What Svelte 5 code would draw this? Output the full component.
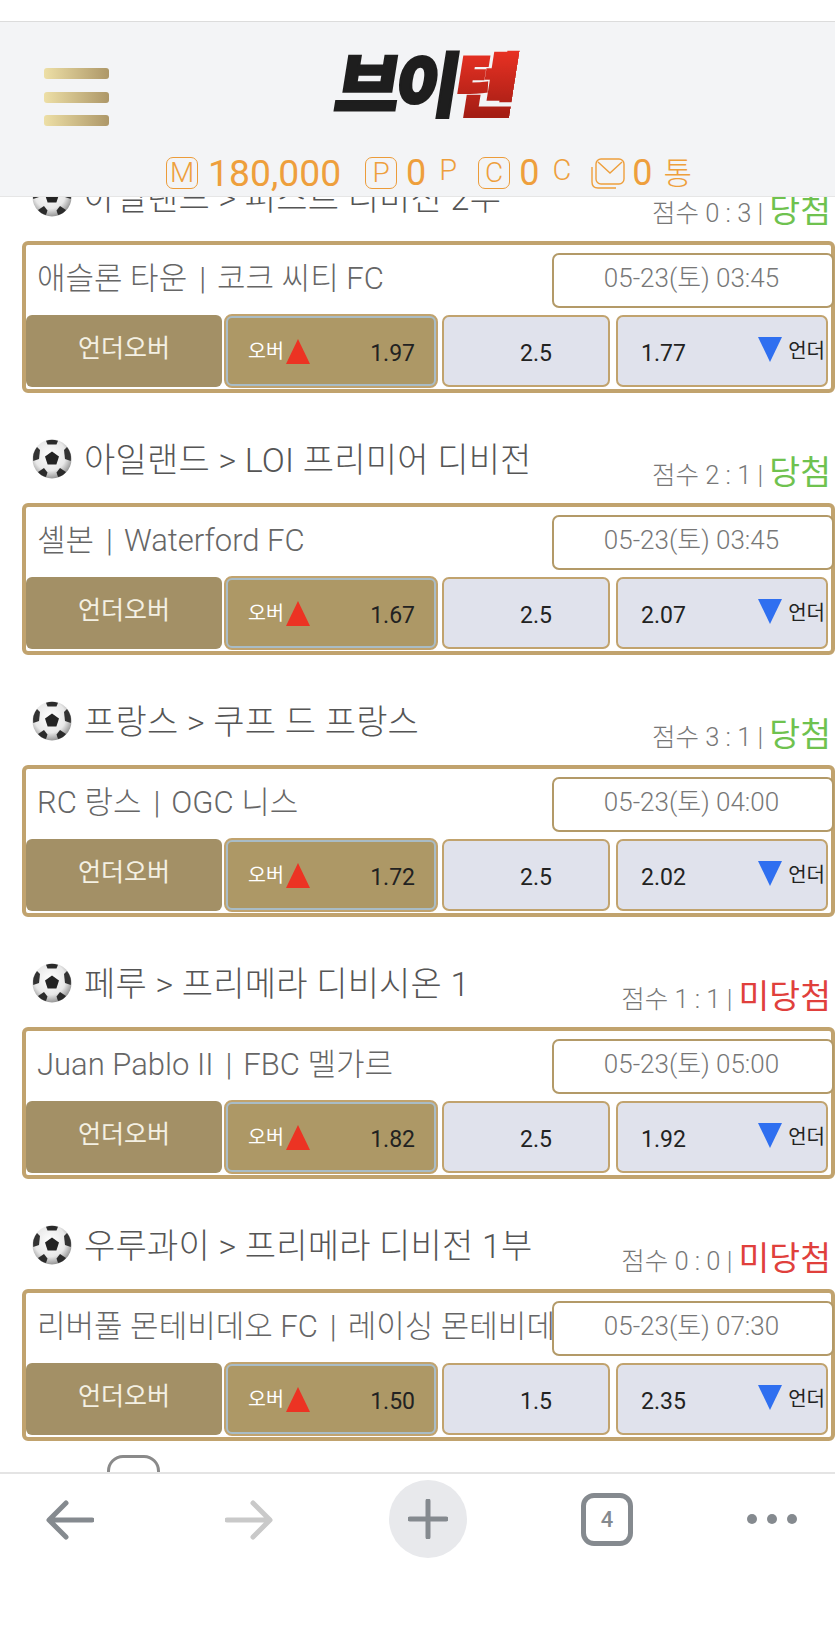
<script>
  const matches = [
    { league: '아일랜드 > 퍼스트 디비전 2부', score: '0 : 3', won: true, home: '애슬론 타운', away: '코크 씨티 FC', date: '05-23(토) 03:45', over: '1.97', line: '2.5', under: '1.77' },
    { league: '아일랜드 > LOI 프리미어 디비전', score: '2 : 1', won: true, home: '셸본', away: 'Waterford FC', date: '05-23(토) 03:45', over: '1.67', line: '2.5', under: '2.07' },
    { league: '프랑스 > 쿠프 드 프랑스', score: '3 : 1', won: true, home: 'RC 랑스', away: 'OGC 니스', date: '05-23(토) 04:00', over: '1.72', line: '2.5', under: '2.02' },
    { league: '페루 > 프리메라 디비시온 1', score: '1 : 1', won: false, home: 'Juan Pablo II', away: 'FBC 멜가르', date: '05-23(토) 05:00', over: '1.82', line: '2.5', under: '1.92' },
    { league: '우루과이 > 프리메라 디비전 1부', score: '0 : 0', won: false, home: '리버풀 몬테비데오 FC', away: '레이싱 몬테비데오 FC', date: '05-23(토) 07:30', over: '1.50', line: '1.5', under: '2.35' }
  ];
</script>

{#snippet ball()}
  <svg class="ball" viewBox="0 0 40 40" aria-hidden="true">
    <defs>
      <radialGradient id="bg" cx="45%" cy="40%" r="62%">
        <stop offset="0" stop-color="#ffffff" />
        <stop offset="0.65" stop-color="#e8e8e8" />
        <stop offset="1" stop-color="#8f8f8f" />
      </radialGradient>
    </defs>
    <circle cx="20" cy="20" r="19.5" fill="url(#bg)" />
    <path d="M20 12.5l7 5-2.6 8h-8.8l-2.6-8z" fill="#232323" />
    <path d="M14 1.8Q20-.2 26 1.8L24.5 5.5h-9z" fill="#2b2b2b" />
    <path d="M1.2 22Q.2 14 5 8l3 3-1 9z" fill="#333" />
    <path d="M38.8 22Q39.8 14 35 8l-3 3 1 9z" fill="#333" />
    <path d="M6 33l6-4 3.5 4.5L14 38Q9 37 6 33z" fill="#2b2b2b" />
    <path d="M34 33l-6-4-3.500 4.500L26 38Q31 37 34 33z" fill="#2b2b2b" />
  </svg>
{/snippet}

<div class="page">
  <div class="top"></div>
  <header class="header">
    <div class="headrow">
      <div class="burger"><i></i><i></i><i></i></div>
      <div class="logo"><span class="blk">브이</span><span class="red">텐</span></div>
    </div>
    <div class="points">
      <span class="badge">M</span><span class="money">180,000</span>
      <span class="badge b2">P</span><span class="num">0</span><span class="unit">P</span>
      <span class="badge b3">C</span><span class="num">0</span><span class="unit">C</span>
      <svg class="mail" viewBox="0 0 34 32" fill="none" stroke="#ee9f3c" stroke-width="1.4" aria-hidden="true">
        <rect x="5" y="2" width="28" height="25" rx="5" />
        <path d="M7 5l12 11L31 5" />
        <path d="M1 10v15q0 6 6 6h18" />
      </svg>
      <span class="num n4">0</span><span class="tong">통</span>
    </div>
  </header>

  <main class="main">
    {#each matches as m, i}
      <section class="sec" class:first={i === 0}>
        <div class="head">
          <div class="title">{@render ball()}<span>{m.league}</span></div>
          <div class="score">점수 {m.score} | <b class:win={m.won} class:lose={!m.won}>{m.won ? '당첨' : '미당첨'}</b></div>
        </div>
        <div class="card">
          <div class="info">
            <div class="name">{m.home}<span class="sep">|</span>{m.away}</div>
            <div class="date">{m.date}</div>
          </div>
          <div class="btns">
            <div class="label">언더오버</div>
            <div class="over">
              <span class="ol">오버</span><span class="tri up"></span><span class="ov">{m.over}</span>
            </div>
            <div class="mid">{m.line}</div>
            <div class="under">
              <span class="uv">{m.under}</span><span class="tri down"></span><span class="ul">언더</span>
            </div>
          </div>
        </div>
      </section>
    {/each}
    <div class="stub"></div>
  </main>

  <nav class="nav">
    <svg class="arrow" viewBox="0 0 48 40" fill="none" stroke="#858a8f" stroke-width="5" stroke-linecap="round" stroke-linejoin="round" aria-hidden="true">
      <path d="M46 20H4M20 3L3 20l17 17" />
    </svg>
    <svg class="arrow fwd" viewBox="0 0 48 40" fill="none" stroke="#c9c9c9" stroke-width="5" stroke-linecap="round" stroke-linejoin="round" aria-hidden="true">
      <path d="M2 20h42M28 3l17 17-17 17" />
    </svg>
    <div class="plus">
      <svg viewBox="0 0 40 40" fill="none" stroke="#858a8f" stroke-width="5" stroke-linecap="round" aria-hidden="true"><path d="M20 2v36M2 20h36" /></svg>
    </div>
    <div class="tabs">4</div>
    <div class="dots"><i></i><i></i><i></i></div>
  </nav>
</div>

<style>
  :global(body) { margin: 0; background: #fff; }
  .page {
    width: 835px; height: 1642px; overflow: hidden; display: flex; flex-direction: column;
    font-family: Roboto, "Noto Sans CJK KR", sans-serif; background: #fff;
  }
  .top { height: 22px; flex: none; border-bottom: 1px solid #dcdcdc; box-sizing: border-box; }
  .header {
    height: 175px; flex: none; background: #f3f4f6; border-bottom: 1px solid #e6e6e6; box-sizing: border-box;
    display: flex; flex-direction: column; color: #ee9f3c;
  }
  .headrow { display: flex; height: 133px; }
  .burger { margin: 46px 0 0 44px; width: 65px; display: flex; flex-direction: column; gap: 12.500px; }
  .burger i { display: block; height: 11px; border-radius: 3px; background: linear-gradient(90deg, #eddfa6, #ad9768); }
  .logo {
    margin: 21px 0 0 228px; height: 76px; font-family: "Noto Sans CJK KR", sans-serif; font-weight: 900; font-size: 70px;
    line-height: 76px; letter-spacing: -5px; transform: skewX(-9deg); white-space: nowrap; color: #1e1e1e;
    -webkit-text-stroke: 2.5px #1e1e1e;
  }
  .red {
    background: linear-gradient(180deg, #ee3325 15%, #a41d14 85%); -webkit-background-clip: text; background-clip: text; color: transparent;
    -webkit-text-stroke: 2.5px transparent;
  }
  .points { display: flex; align-items: center; padding-left: 166px; height: 32px; margin-top: 2px; }
  .badge {
    flex: none; box-sizing: border-box; width: 32px; height: 32px; border: 1.5px solid #ec9c3a; border-radius: 7px;
    display: flex; align-items: center; justify-content: center; font-size: 28px; font-weight: 300; line-height: 1;
  }
  .money { font-size: 37.300px; margin-left: 10px; line-height: 32px; }
  .b2 { margin-left: 24px; }
  .b3 { margin-left: 21px; }
  .num { font-size: 36px; margin-left: 9px; line-height: 32px; font-weight: 400; }
  .unit { font-size: 29px; font-weight: 300; margin-left: 13px; margin-top: -6px; line-height: 32px; }
  .mail { width: 34px; height: 32px; margin-left: 20px; flex: none; }
  .n4 { margin-left: 7px; }
  .tong { font-size: 31px; margin-left: 11px; margin-top: 2px; line-height: 32px; font-weight: 300; }

  .main { flex: 1; min-height: 0; overflow: hidden; }
  .sec { height: 262px; }
  .first { margin-top: -66px; }
  .head { height: 110px; display: flex; justify-content: space-between; padding-right: 4px; }
  .title { display: flex; align-items: center; height: 40px; margin: 44px 0 0 32px; gap: 12px; font-size: 34px; font-weight: 300; letter-spacing: 0.2px; color: #555; white-space: nowrap; }
  .ball { width: 40px; height: 40px; flex: none; margin-top: 4px; }
  .score { align-self: flex-end; margin-bottom: 8px; font-size: 25.500px; font-weight: 300; color: #777; line-height: 40px; white-space: nowrap; }
  .score b { font-size: 33.500px; font-weight: 400; }
  .win { color: #6fc24f; }
  .lose { color: #e0403c; }

  .card { margin-left: 22px; width: 813px; height: 152px; box-sizing: border-box; border: 4px solid #c1a36e; border-radius: 6px; background: #fff; }
  .info { height: 70px; display: flex; align-items: center; }
  .name { flex: 1; min-width: 0; overflow: hidden; white-space: nowrap; padding: 0 0 10px 11px; font-size: 31px; font-weight: 300; color: #666; }
  .sep { margin: 0 11px 0 12px; }
  .date {
    flex: none; box-sizing: border-box; width: 282px; height: 55px; margin-right: -3px; border: 2px solid #b39a68; border-radius: 7px; background: #fff;
    display: flex; align-items: center; justify-content: center; padding: 0 3px 10px 0; font-size: 26px; font-weight: 300; color: #777;
  }
  .btns { display: flex; height: 72px; color: #222; }
  .label { width: 196px; margin-right: 3px; background: #a39066; border-radius: 6px; color: #f4f0e3; font-size: 25px; display: flex; align-items: center; justify-content: center; padding-bottom: 10px; box-sizing: border-box; }
  .over {
    width: 212px; margin-right: 5px; box-sizing: border-box; background: #ad9866; border: 3px solid #a9bcc6; outline: 2px solid #c1a36e; outline-offset: -1px; border-radius: 7px;
    display: flex; align-items: center; padding: 4px 19px 0 20px; font-size: 23px;
  }
  .ol { color: #fff; font-size: 19.500px; margin-top: -8px; }
  .tri { width: 0; height: 0; border-left: 12.500px solid transparent; border-right: 12.500px solid transparent; flex: none; }
  .up { border-bottom: 25px solid #ec3323; margin-left: 2px; margin-top: -4px; }
  .down { border-top: 25px solid #2f6ff0; margin-left: auto; margin-top: -8px; }
  .ov { margin-left: auto; }
  .mid {
    width: 168px; margin-right: 6px; box-sizing: border-box; background: #e0e2ec; border: 2px solid #c1a36e; border-radius: 7px;
    display: flex; align-items: center; justify-content: center; padding: 4px 0 0 20px; font-size: 23px;
  }
  .under {
    width: 212px; box-sizing: border-box; background: #e0e2ec; border: 2px solid #c1a36e; border-radius: 7px;
    display: flex; align-items: center; padding: 4px 1px 0 23px; font-size: 23px;
  }
  .ul { font-size: 20px; margin-left: 6px; margin-top: -8px; }
  .stub { box-sizing: border-box; margin: 14px 0 0 107px; width: 53px; height: 50px; border: 3px solid #8a8a8a; border-radius: 16px; }

  .nav {
    height: 170px; flex: none; box-sizing: border-box; border-top: 2px solid #e4e4e4; background: #fff;
    display: flex; align-items: flex-start; padding: 6px 0 0 46px;
  }
  .arrow { width: 48px; height: 40px; margin-top: 20px; flex: none; }
  .fwd { margin-left: 131px; }
  .plus { width: 78px; height: 78px; border-radius: 50%; background: #e8e9ec; margin-left: 116px; display: flex; align-items: center; justify-content: center; flex: none; }
  .plus svg { width: 40px; height: 40px; }
  .tabs { box-sizing: border-box; width: 52px; height: 53px; margin: 13px 0 0 114px; border: 5px solid #858a8f; border-radius: 13px; display: flex; align-items: center; justify-content: center; font-size: 22px; font-weight: 500; color: #858a8f; flex: none; }
  .dots { display: flex; gap: 10px; margin: 34px 0 0 114px; }
  .dots i { display: block; width: 10px; height: 10px; border-radius: 50%; background: #858a8f; }
</style>
